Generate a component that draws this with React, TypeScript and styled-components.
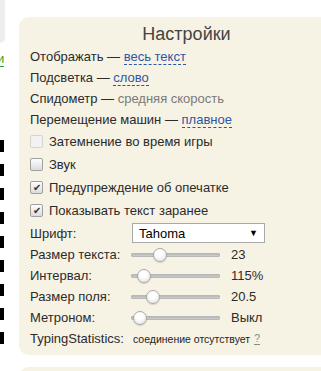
import React from "react";
import styled, { createGlobalStyle } from "styled-components";

const GlobalStyle = createGlobalStyle`
  html, body {
    margin: 0;
    padding: 0;
    background: #fff;
    overflow: hidden;
  }
  body {
    font-family: "Liberation Sans", Arial, sans-serif;
    font-size: 13px;
    color: #2b2b2b;
  }
`;

const Page = styled.div`
  display: flex;
  align-items: flex-start;
  width: 400px;
`;

const Gutter = styled.div`
  width: 19px;
  flex: none;
  display: flex;
  flex-direction: column;
`;

const GreyBox = styled.div`
  width: 5px;
  height: 43px;
  background: #eeeeee;
  border-bottom-right-radius: 6px;
`;

const GreenLink = styled.span`
  display: block;
  margin: 5px 0 0 -3px;
  line-height: 21px;
  color: #33a52a;
  span {
    border-bottom: 1px solid #33a52a;
  }
`;

const Marks = styled.div`
  display: flex;
  flex-direction: column;
  gap: 12px;
  margin-top: 71px;
`;

const Mark = styled.div`
  width: 4px;
  height: 12px;
  background: #000;
`;

const Column = styled.div`
  display: flex;
  flex-direction: column;
  gap: 12px;
  margin-top: 17px;
`;

const Panel = styled.div`
  width: 335px;
  box-sizing: border-box;
  background: #f6f2e4;
  border-radius: 10px;
  padding: 6px 0 6px 11px;
`;

const Title = styled.div`
  text-align: center;
  font-size: 18px;
  line-height: 23px;
  color: #444;
  padding-right: 11px;
`;

const Line = styled.div`
  line-height: 21px;
  white-space: nowrap;
`;

const Dashed = styled.span`
  color: #2b58a6;
  border-bottom: 1px dashed #2b58a6;
`;

const Muted = styled.span`
  color: #7a7a7a;
`;

const CheckRow = styled.div`
  display: flex;
  align-items: center;
  height: 23px;
  white-space: nowrap;
`;

const Box = styled.span<{ $disabled?: boolean }>`
  width: 11px;
  height: 11px;
  margin-right: 6px;
  border: 1px solid ${p => (p.$disabled ? "#d4d4d4" : "#a0a0a0")};
  border-radius: 2px;
  background: ${p => (p.$disabled ? "#f2f2f2" : "linear-gradient(#fdfdfd, #dcdcdc)")};
  display: flex;
  align-items: center;
  justify-content: center;
  font-size: 10px;
  line-height: 1;
  color: #333;
`;

const FieldRow = styled.div<{ $h: number }>`
  display: flex;
  align-items: center;
  height: ${p => p.$h}px;
  white-space: nowrap;
`;

const Label = styled.span<{ $w: number }>`
  width: ${p => p.$w}px;
  flex: none;
`;

const Select = styled.div`
  width: 133px;
  height: 20px;
  box-sizing: border-box;
  border: 1px solid #a9a9a9;
  background: #fff;
  display: flex;
  align-items: center;
  justify-content: space-between;
  padding: 0 6px;
  color: #000;
  font-size: 13px;
`;

const Arrow = styled.span`
  font-size: 9px;
  color: #000;
`;

const Track = styled.div`
  position: relative;
  width: 89px;
  height: 4px;
  border-radius: 3px;
  background: linear-gradient(#a9a9a9, #dcdcdc);
  box-shadow: inset 0 0 0 1px #b8b8b8;
  margin-right: 11px;
  flex: none;
`;

const Thumb = styled.span`
  position: absolute;
  top: -5px;
  width: 14px;
  height: 14px;
  margin-left: -7px;
  box-sizing: border-box;
  border-radius: 50%;
  border: 1px solid #aaa;
  background: radial-gradient(circle at 45% 35%, #ffffff 30%, #dedede 100%);
  box-shadow: 0 1px 1px rgba(0, 0, 0, 0.15);
`;

const Status = styled.span`
  font-size: 10.5px;
  margin-left: 9px;
  color: #1e1e1e;
`;

const Help = styled.span`
  font-size: 10.5px;
  color: #888;
  border-bottom: 1px dashed #888;
  margin-left: 4px;
`;

const NextPanel = styled.div`
  width: 335px;
  height: 40px;
  background: #f6f2e4;
  border-radius: 10px 10px 0 0;
`;

const checks = [
  { label: "Затемнение во время игры", checked: false, disabled: true },
  { label: "Звук", checked: false, disabled: false },
  { label: "Предупреждение об опечатке", checked: true, disabled: false },
  { label: "Показывать текст заранее", checked: true, disabled: false },
];

const sliders = [
  { label: "Размер текста:", pos: 29, value: "23" },
  { label: "Интервал:", pos: 13, value: "115%" },
  { label: "Размер поля:", pos: 22, value: "20.5" },
  { label: "Метроном:", pos: 9, value: "Выкл" },
];

const App = () => {
  return <Page>
    <GlobalStyle/>
    <Gutter>
      <GreyBox/>
      <GreenLink><span>и</span></GreenLink>
      <Marks>
        {Array.from({ length: 9 }).map((_, i) => <Mark key={i}/>)}
      </Marks>
    </Gutter>
    <Column>
      <Panel>
        <Title>Настройки</Title>
        <Line>Отображать — <Dashed>весь текст</Dashed></Line>
        <Line>Подсветка — <Dashed>слово</Dashed></Line>
        <Line>Спидометр — <Muted>средняя скорость</Muted></Line>
        <Line>Перемещение машин — <Dashed>плавное</Dashed></Line>
        {checks.map(c =>
          <CheckRow key={c.label}>
            <Box $disabled={c.disabled}>{c.checked ? "✔" : null}</Box>
            {c.label}
          </CheckRow>
        )}
        <FieldRow $h={22}>
          <Label $w={102}>Шрифт:</Label>
          <Select>Tahoma<Arrow>▼</Arrow></Select>
        </FieldRow>
        {sliders.map(s =>
          <FieldRow $h={21} key={s.label}>
            <Label $w={101}>{s.label}</Label>
            <Track>
              <Thumb style={{ left: s.pos }}/>
            </Track>
            {s.value}
          </FieldRow>
        )}
        <FieldRow $h={21}>
          TypingStatistics:
          <Status>соединение отсутствует</Status>
          <Help>?</Help>
        </FieldRow>
      </Panel>
      <NextPanel/>
    </Column>
  </Page>;
};

export default App;
